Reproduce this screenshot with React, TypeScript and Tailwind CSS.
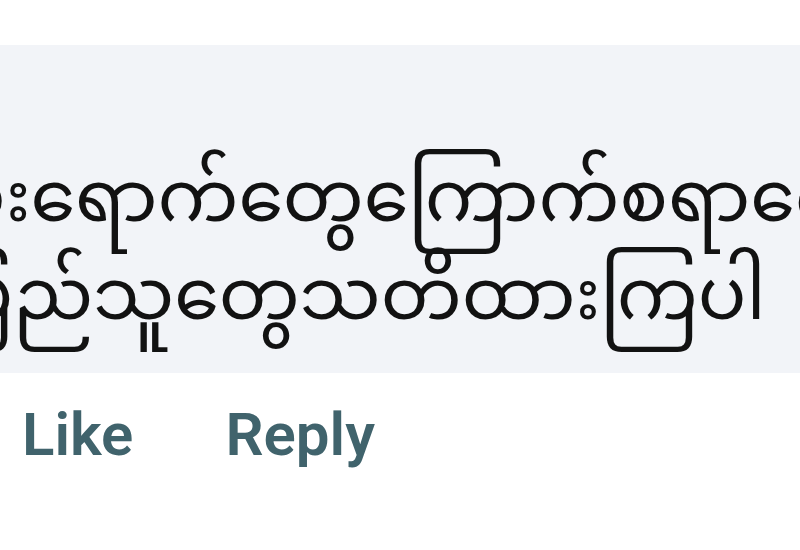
import React from "react";

const myanmarFont = {
  fontFamily: '"Noto Sans Myanmar", "Padauk", "Myanmar Text", "Noto Sans", sans-serif',
};

const CommentCrop = () => {
  return (
    <div className="w-[800px] h-[550px] bg-white overflow-hidden">
      {/* top strip */}
      <div className="h-[45px] bg-white" />

      {/* comment bubble */}
      <div className="h-[328px] bg-[#f2f4f8] overflow-hidden pt-[111px]">
        <div
          className="text-[#121212] text-[72px] leading-[98px] whitespace-nowrap"
          style={myanmarFont}
        >
          <div className="-ml-[43px]">ပိုးရောက်တွေကြောက်စရာကောင်း</div>
          <div className="-ml-[52px]">ပြည်သူတွေသတိထားကြပါ</div>
        </div>
      </div>

      {/* actions */}
      <div className="flex items-center gap-[92px] pl-[22px] pt-[27px] font-['Roboto',sans-serif] font-semibold text-[60px] leading-[70px] text-[#40636c]">
        <span>Like</span>
        <span>Reply</span>
      </div>
    </div>
  );
};

export default CommentCrop;
